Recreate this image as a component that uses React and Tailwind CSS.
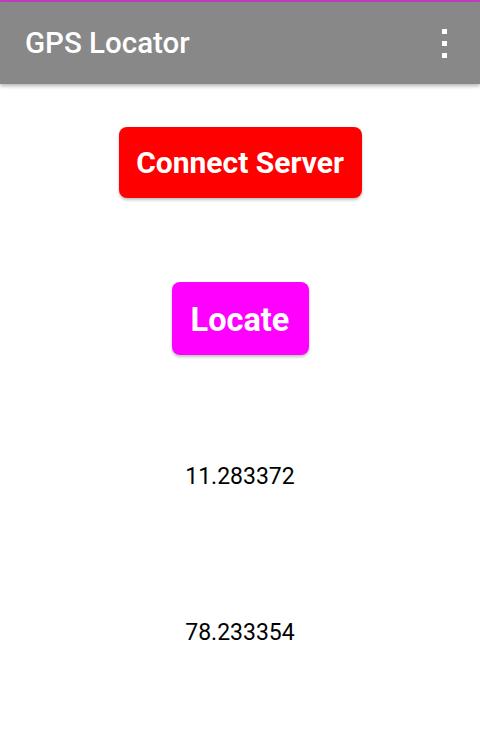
export default function App() {
  return (
    <div className="min-h-[744px] bg-white font-['Roboto',sans-serif]">
      <div className="h-[2px] bg-[#c040c0]" />
      <header className="relative flex h-[82px] items-center justify-between bg-[#888888] pl-[25px] pr-[33px] shadow-[0_2px_4px_rgba(0,0,0,0.3)]">
        <h1 className="text-[29.5px] font-medium text-white">GPS Locator</h1>
        <div className="flex flex-col gap-[7px]">
          <span className="block h-[5px] w-[5px] bg-white" />
          <span className="block h-[5px] w-[5px] bg-white" />
          <span className="block h-[5px] w-[5px] bg-white" />
        </div>
      </header>
      <main className="flex flex-col items-center">
        <button className="mt-[43px] h-[71px] w-[243px] rounded-[8px] bg-[#ff0000] text-[30px] font-bold text-white shadow-[0_2px_3px_rgba(0,0,0,0.25)]">
          Connect Server
        </button>
        <button className="mt-[84px] h-[73px] w-[137px] rounded-[8px] bg-[#ff00ff] pt-[3px] text-[32.5px] font-bold text-white shadow-[0_2px_3px_rgba(0,0,0,0.25)]">
          Locate
        </button>
        <p className="mt-[105px] text-[23px] text-black">11.283372</p>
        <p className="mt-[121px] text-[23px] text-black">78.233354</p>
      </main>
    </div>
  )
}
